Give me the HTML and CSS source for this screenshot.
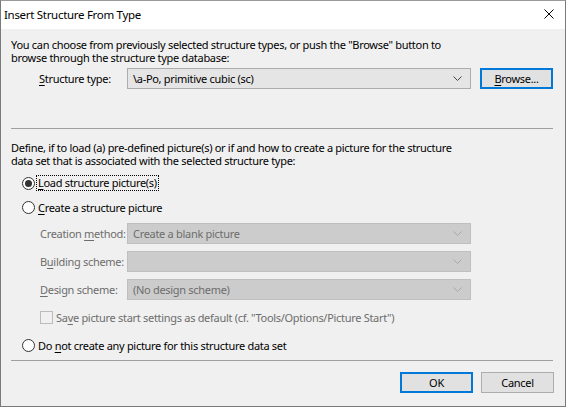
FILE: index.html
```html
<!DOCTYPE html>
<html lang="en">
<head>
    <meta charset="UTF-8">
    <title>Insert Structure From Type</title>
    <link rel="stylesheet" href="styles.css">
</head>
<body>
    <div class="window">
        <div class="titlebar">
            <span class="title">Insert Structure From Type</span>
            <svg class="close" width="10" height="10" viewBox="0 0 10 10">
                <path d="M0.5 0.5 L9.5 9.5 M9.5 0.5 L0.5 9.5" stroke="#000" stroke-width="1" fill="none"/>
            </svg>
        </div>

        <div class="content">
            <p class="text">You can choose from previously selected structure types, or push the "Browse" button to<br>browse through the structure type database:</p>

            <div class="row type-row">
                <label class="label"><u>S</u>tructure type:</label>
                <div class="combo">
                    <span>\a-Po, primitive cubic (sc)</span>
                    <svg class="chevron" width="9" height="5" viewBox="0 0 9 5"><path d="M0.5 0.5 L4.5 4.5 L8.5 0.5" stroke="#444" fill="none"/></svg>
                </div>
                <button class="btn focused"><u>B</u>rowse...</button>
            </div>

            <hr class="sep sep-top">

            <p class="text">Define, if to load (a) pre-defined picture(s) or if and how to create a picture for the structure<br>data set that is associated with the selected structure type:</p>

            <div class="radio-row first">
                <span class="radio checked"></span>
                <span class="focus"><u>L</u>oad structure picture(s)</span>
            </div>
            <div class="radio-row">
                <span class="radio"></span>
                <span class="radio-text"><u>C</u>reate a structure picture</span>
            </div>

            <div class="options">
                <div class="row disabled">
                    <label class="label">Creation <u>m</u>ethod:</label>
                    <div class="combo">
                        <span>Create a blank picture</span>
                        <svg class="chevron" width="9" height="5" viewBox="0 0 9 5"><path d="M0.5 0.5 L4.5 4.5 L8.5 0.5" stroke="#a8a8a8" fill="none"/></svg>
                    </div>
                </div>
                <div class="row disabled">
                    <label class="label">B<u>u</u>ilding scheme:</label>
                    <div class="combo">
                        <span></span>
                        <svg class="chevron" width="9" height="5" viewBox="0 0 9 5"><path d="M0.5 0.5 L4.5 4.5 L8.5 0.5" stroke="#a8a8a8" fill="none"/></svg>
                    </div>
                </div>
                <div class="row disabled">
                    <label class="label"><u>D</u>esign scheme:</label>
                    <div class="combo">
                        <span>(No design scheme)</span>
                        <svg class="chevron" width="9" height="5" viewBox="0 0 9 5"><path d="M0.5 0.5 L4.5 4.5 L8.5 0.5" stroke="#a8a8a8" fill="none"/></svg>
                    </div>
                </div>
                <div class="check-row disabled">
                    <span class="checkbox"></span>
                    <span>Sa<u>v</u>e picture start settings as default (cf. "Tools/Options/Picture Start")</span>
                </div>
            </div>

            <div class="radio-row last">
                <span class="radio"></span>
                <span class="radio-text">Do <u>n</u>ot create any picture for this structure data set</span>
            </div>

            <hr class="sep sep-bottom">

            <div class="buttons">
                <button class="btn focused">OK</button>
                <button class="btn">Cancel</button>
            </div>
        </div>
    </div>
</body>
</html>
```
FILE: styles.css
```css
body {
    margin: 0;
    font-family: "Noto Sans", sans-serif;
    font-size: 11px;
    letter-spacing: -0.3px;
    color: #000;
}
.window {
    width: 566px;
    height: 407px;
    box-sizing: border-box;
    border: 1px solid #7a7a7a;
    border-top-color: #9a9a9a;
    background: #f0f0f0;
    display: flex;
    flex-direction: column;
}
.titlebar {
    height: 28px;
    background: #fff;
    display: flex;
    align-items: center;
    justify-content: space-between;
    padding: 0 11px 0 3px;
    font-size: 11.5px;
}
.title {
    margin-top: -2px;
}
.close {
    margin-top: -2px;
}
.content {
    padding: 9px 11px 0 10px;
    display: flex;
    flex-direction: column;
}
u {
    text-decoration: underline;
    text-underline-offset: 2px;
}
.text {
    margin: 0;
    line-height: 13px;
}
.row {
    display: flex;
    align-items: center;
    height: 21px;
}
.type-row {
    margin-top: 4px;
}
.label {
    width: 88px;
    padding-left: 28px;
}
.combo {
    box-sizing: border-box;
    width: 344px;
    height: 21px;
    border: 1px solid #adadad;
    background: #e5e5e5;
    display: flex;
    align-items: center;
    justify-content: space-between;
    padding: 0 8px 0 5px;
}
.chevron {
    display: block;
}
.btn {
    box-sizing: border-box;
    width: 73px;
    height: 21px;
    border: 1px solid #adadad;
    background: #e1e1e1;
    font: inherit;
    letter-spacing: inherit;
    color: #000;
    padding: 0;
}
.btn.focused {
    border: 2px solid #0078d7;
}
.type-row .btn {
    margin-left: 9px;
}
.sep {
    margin: 0;
    border: none;
    height: 1px;
    background: #a0a0a0;
    width: 542px;
}
.sep-top {
    margin-top: 39px;
}
.sep-bottom {
    margin-top: 5px;
}
.sep-top + .text {
    margin-top: 12px;
}
.radio-row {
    display: flex;
    align-items: center;
    height: 24px;
    padding-left: 11px;
}
.radio-row.first {
    margin-top: 4px;
}
.radio-row.last {
    margin-top: 9px;
    height: 20px;
}
.radio {
    box-sizing: border-box;
    width: 13px;
    height: 13px;
    border: 1px solid #333;
    border-radius: 50%;
    background: #fff;
    margin-right: 2px;
    position: relative;
}
.radio.checked::after {
    content: "";
    position: absolute;
    left: 2px;
    top: 2px;
    width: 7px;
    height: 7px;
    border-radius: 50%;
    background: #333;
}
.focus {
    outline: 1px dotted #000;
    padding: 0 1px;
    line-height: 14px;
}
.radio-text {
    padding-left: 1px;
}
.options {
    display: flex;
    flex-direction: column;
    gap: 7px;
    margin-top: 4px;
}
.options .label {
    padding-left: 29px;
    width: 87px;
}
.disabled {
    color: #6d6d6d;
}
.disabled .combo {
    border-color: #bfbfbf;
    background: #cccccc;
}
.check-row {
    display: flex;
    align-items: center;
    height: 18px;
    margin-top: 1px;
    padding-left: 29px;
}
.checkbox {
    box-sizing: border-box;
    width: 13px;
    height: 13px;
    border: 1px solid #bcbcbc;
    background: #f0f0f0;
    margin-right: 3px;
}
.buttons {
    display: flex;
    justify-content: flex-end;
    gap: 8px;
    margin-top: 11px;
}
```
